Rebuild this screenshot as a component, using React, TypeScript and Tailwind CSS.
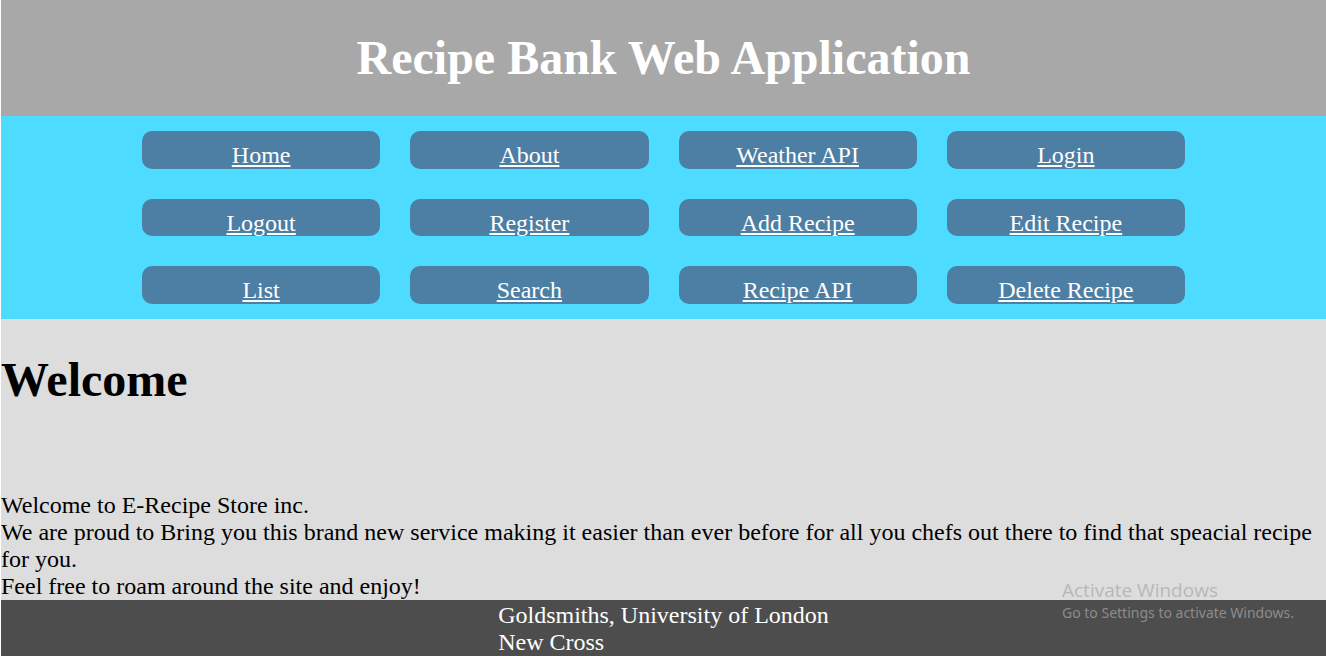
const links = [
  'Home', 'About', 'Weather API', 'Login',
  'Logout', 'Register', 'Add Recipe', 'Edit Recipe',
  'List', 'Search', 'Recipe API', 'Delete Recipe',
];

export default function App() {
  return (
    <div className="relative min-h-screen flex flex-col pl-px bg-white font-['Liberation_Serif',serif] text-[24px] leading-[27px] text-black">
      <header className="bg-[#a8a8a8] py-[31px] text-center text-white">
        <h1 className="text-[48px] leading-[54px] font-bold">Recipe Bank Web Application</h1>
      </header>
      <nav className="bg-[#4ddbff] px-[140px] py-[15px]">
        <ul className="grid h-[173px] grid-cols-4 grid-rows-3 gap-[30px] px-px">
          {links.map((label) => (
            <li key={label} className="rounded-[10px] bg-[#4d7ea3] pt-[11px] text-center text-white">
              <a href="#" className="underline">{label}</a>
            </li>
          ))}
        </ul>
      </nav>
      <main className="bg-[#dddddd] pt-[34px]">
        <h2 className="text-[48px] leading-[54px] font-bold">Welcome</h2>
        <div className="pt-[85px]">
          <p>Welcome to E-Recipe Store inc.</p>
          <p>We are proud to Bring you this brand new service making it easier than ever before for all you chefs out there to find that speacial recipe for you.</p>
          <p>Feel free to roam around the site and enjoy!</p>
        </div>
      </main>
      <footer className="grow bg-[#4d4d4d] pt-[2px] flex justify-center text-white">
        <address className="not-italic">
          <p>Goldsmiths, University of London</p>
          <p>New Cross</p>
        </address>
      </footer>
      <aside className="absolute right-[28px] bottom-[33px] w-[236px]">
        <p className="font-['Open_Sans',sans-serif] text-[19px] leading-[26px] text-[#b8b8b8]">Activate Windows</p>
        <p className="font-['Noto_Sans',sans-serif] text-[14px] leading-[20px] whitespace-nowrap text-[#8c8c8c]">Go to Settings to activate Windows.</p>
      </aside>
    </div>
  );
}
